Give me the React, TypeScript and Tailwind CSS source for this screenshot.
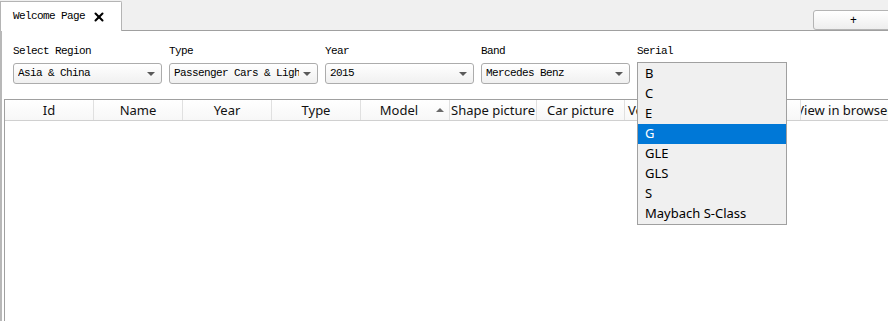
import { X } from 'lucide-react';

// Main window — tab bar, filter comboboxes, results table, open Serial popup
const mono = { fontFamily: '"Liberation Mono", "DejaVu Sans Mono", monospace' };
const sans = { fontFamily: '"Noto Sans", "Open Sans", sans-serif' };

const filters = [
  { label: 'Select Region', value: 'Asia & China' },
  { label: 'Type', value: 'Passenger Cars & Light Trucks' },
  { label: 'Year', value: '2015' },
  { label: 'Band', value: 'Mercedes Benz' },
  { label: 'Serial', value: 'G' },
];

const columns = [
  { name: 'Id', w: 'w-[89px]' },
  { name: 'Name', w: 'w-[89px]' },
  { name: 'Year', w: 'w-[89px]' },
  { name: 'Type', w: 'w-[89px]' },
  { name: 'Model', w: 'w-[89px] pr-[12px]', sort: true },
  { name: 'Shape picture', w: 'w-[87px]' },
  { name: 'Car picture', w: 'w-[88px]' },
  { name: 'Vehicle photo', w: 'w-[88px] justify-start pl-[3px]' },
  { name: 'Video link', w: 'w-[88px]' },
  { name: 'View in browser', w: 'w-[88px]' },
];

const serials = ['B', 'C', 'E', 'G', 'GLE', 'GLS', 'S', 'Maybach S-Class'];

function Combo({ value }: { value: string }) {
  return (
    <div className="w-[149px] h-[21px] flex items-center rounded-[3px] border border-[#acacac] bg-gradient-to-b from-white to-[#f0f0f0] pl-[4px] pr-[6px]">
      <span className="flex-1 overflow-hidden whitespace-nowrap text-[11px] tracking-[-0.6px] text-black" style={mono}>
        {value}
      </span>
      <span className="ml-1 w-0 h-0 border-l-[4px] border-r-[4px] border-t-[4px] border-l-transparent border-r-transparent border-t-[#5a5a5a]" />
    </div>
  );
}

export default function App() {
  return (
    <div className="w-[888px] h-[321px] overflow-hidden bg-white flex flex-col">

      {/* Tab bar */}
      <div className="h-[31px] flex items-end bg-[#f0f0f0] border-b border-[#a0a0a0] shrink-0">
        <div className="h-[30px] w-[122px] -mb-px flex items-center gap-[7px] bg-white border border-b-0 border-[#b4b4b4] rounded-tr-[2px] pl-[12px]">
          <span className="text-[11px] tracking-[-0.6px] text-black" style={mono}>Welcome Page</span>
          <X size={14} strokeWidth={3.5} className="text-black" />
        </div>
        <div className="ml-auto -mr-[10px] w-[85px] h-[20px] flex items-center pl-[36px] rounded-[3px] border border-[#b4b4b4] bg-gradient-to-b from-white to-[#eeeeee] text-[12px] text-black" style={sans}>
          +
        </div>
      </div>

      {/* Content pane */}
      <div className="relative flex-1 flex flex-col border-l-2 border-[#b8b8b8]">

        {/* Filters */}
        <div className="flex gap-[7px] pl-[11px] pt-[12px]">
          {filters.map((f) => (
            <div key={f.label} className="flex flex-col">
              <span className="h-[15px] mb-[5px] text-[11px] leading-[16px] tracking-[-0.6px] text-black" style={mono}>
                {f.label}
              </span>
              <Combo value={f.value} />
            </div>
          ))}
        </div>

        {/* Table */}
        <div className="mt-[15px] ml-[2px] flex-1 border-l border-t border-[#a0a0a0] bg-white">
          <div className="flex h-[21px] border-b border-[#d0d0d0] bg-gradient-to-b from-white to-[#f7f7f7]" style={sans}>
            {columns.map((c) => (
              <div
                key={c.name}
                className={`${c.w} shrink-0 relative flex items-center justify-center pt-[2px] overflow-hidden whitespace-nowrap border-r border-[#e0e0e0] text-[13px] text-[#111]`}
              >
                {c.name}
                {c.sort && (
                  <span className="absolute right-[5px] top-[8px] w-0 h-0 border-l-[4px] border-r-[4px] border-b-[4px] border-l-transparent border-r-transparent border-b-[#6a6a6a]" />
                )}
              </div>
            ))}
          </div>
        </div>

        {/* Serial popup list */}
        <div className="absolute left-[635px] top-[31px] w-[150px] h-[163px] pt-px border border-[#a0a0a0] bg-[#f0f0f0] flex flex-col" style={sans}>
          {serials.map((s) => (
            <div
              key={s}
              className={`h-[20px] shrink-0 flex items-center pl-[7px] text-[13px] ${s === 'G' ? 'bg-[#0078d7] text-white' : 'text-black'}`}
            >
              {s}
            </div>
          ))}
        </div>
      </div>
    </div>
  );
}
